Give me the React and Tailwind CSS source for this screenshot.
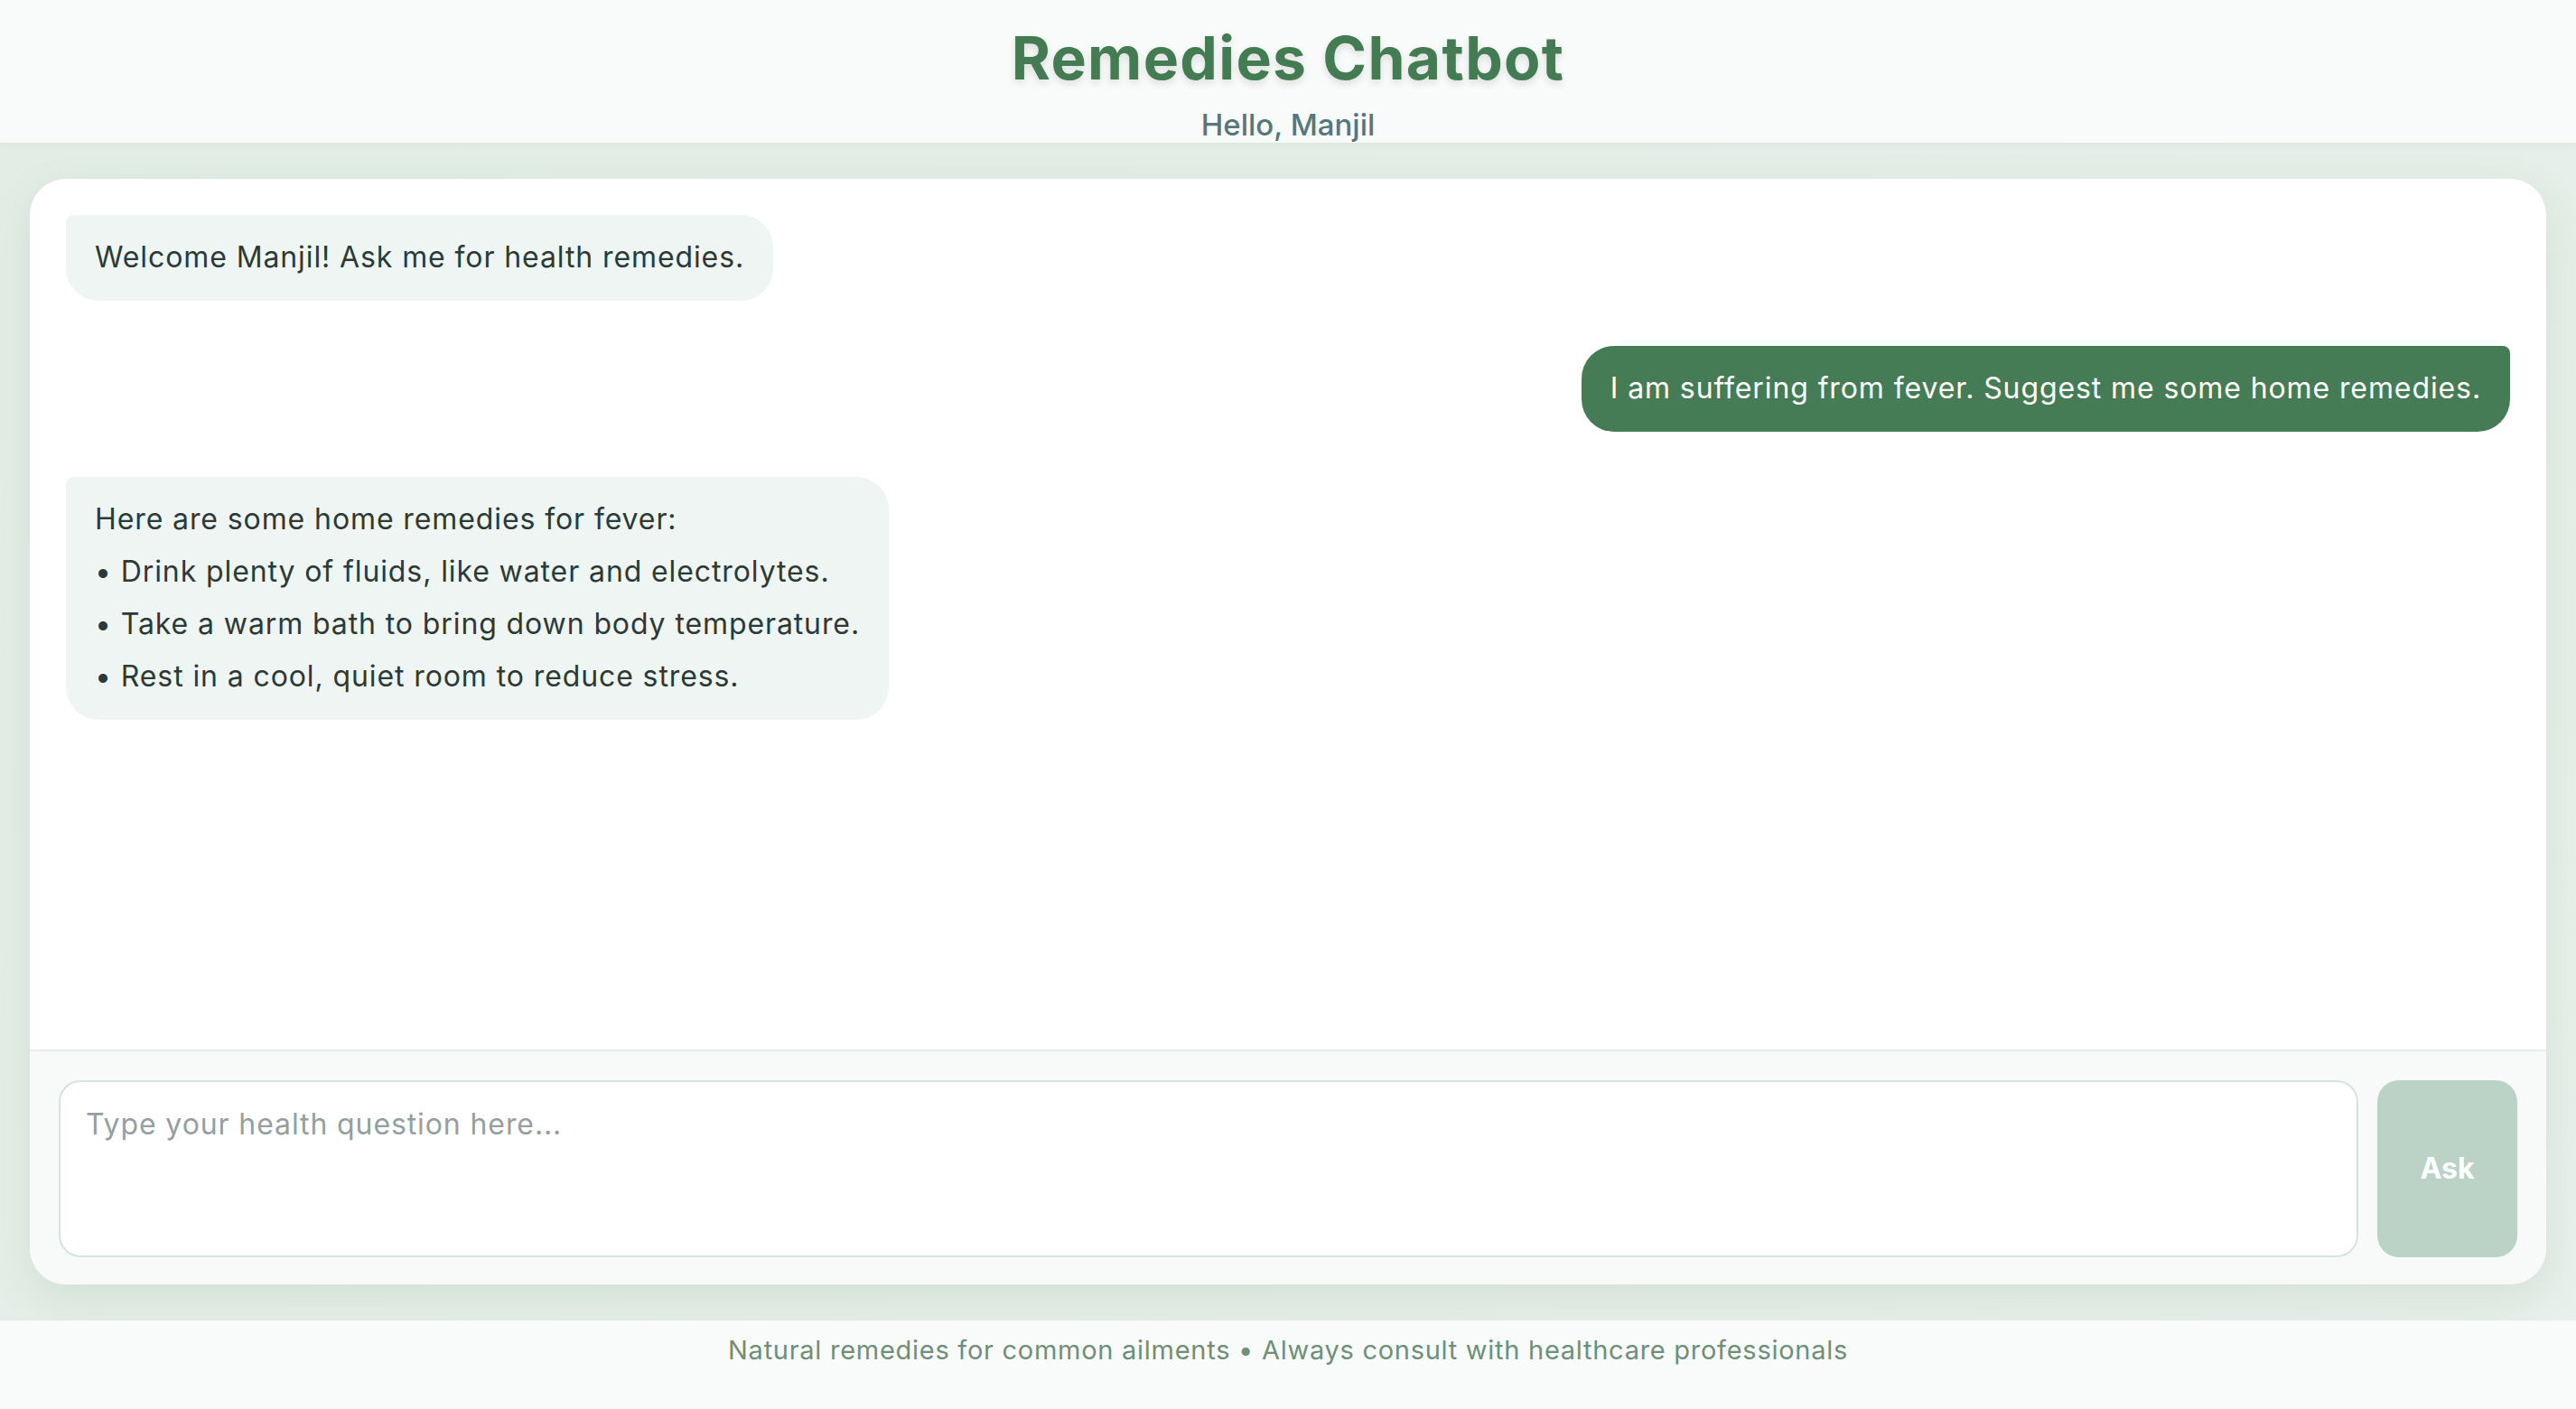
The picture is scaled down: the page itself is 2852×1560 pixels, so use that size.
import { useState } from "react";

const messages = [
  { id: 1, from: "bot", lines: ["Welcome Manjil! Ask me for health remedies."] },
  { id: 2, from: "user", lines: ["I am suffering from fever. Suggest me some home remedies."] },
  {
    id: 3,
    from: "bot",
    lines: [
      "Here are some home remedies for fever:",
      "• Drink plenty of fluids, like water and electrolytes.",
      "• Take a warm bath to bring down body temperature.",
      "• Rest in a cool, quiet room to reduce stress.",
    ],
  },
];

function Bubble({ msg }) {
  const mine = msg.from === "user";
  return (
    <div
      className={`max-w-[70%] px-8 pt-6 pb-[25px] text-[32px] leading-[46px] tracking-[0.028em] rounded-[36px] flex flex-col gap-3 ${
        mine
          ? "self-end bg-[#467c55] text-white rounded-tr-[8px]"
          : "self-start bg-[#eff5f2] text-[#2c3a37] rounded-tl-[8px]"
      }`}
    >
      {msg.lines.map((l, i) => (
        <div key={i}>{l}</div>
      ))}
    </div>
  );
}

export default function App() {
  const [question, setQuestion] = useState("");

  return (
    <div className="h-[1560px] flex flex-col bg-gradient-to-br from-[#e2ede6] to-[#e8f0eb] font-[Inter,'Noto_Sans',sans-serif]">
      {/* header */}
      <header className="h-[158px] shrink-0 bg-[#f8fbf9] flex flex-col items-center pt-[26px] shadow-[0_2px_8px_rgba(67,124,82,0.06)]">
        <h1 className="text-[66px] leading-[77px] font-bold tracking-[0.02em] text-[#437c52] [text-shadow:0_4px_8px_rgba(0,0,0,0.12)]">
          Remedies Chatbot
        </h1>
        <div className="mt-4 text-[33px] leading-[38px] font-medium text-[#56777c]">Hello, Manjil</div>
      </header>

      {/* chat card */}
      <main className="flex-1 min-h-0 px-[33px] py-10">
        <div className="h-full flex flex-col bg-white rounded-[40px] overflow-hidden shadow-[0_16px_48px_rgba(67,124,82,0.12)]">
          <div className="flex-1 min-h-0 p-10 flex flex-col gap-[50px]">
            {messages.map((m) => (
              <Bubble key={m.id} msg={m} />
            ))}
          </div>

          <div className="border-t-2 border-[#e6efea] bg-[#f8faf9] px-8 pt-8 pb-[30px] flex gap-[21px]">
            <textarea
              value={question}
              onChange={(e) => setQuestion(e.target.value)}
              placeholder="Type your health question here..."
              className="flex-1 h-[196px] resize-none rounded-[24px] border-2 border-[#d4e6dc] bg-white px-[28px] py-6 text-[32px] leading-[46px] tracking-[0.028em] text-[#2c3a37] placeholder:text-[#959f9f] outline-none"
            />
            <button
              disabled={!question.trim()}
              className="w-[155px] h-[196px] rounded-[24px] bg-[#bad3c6] text-white text-[32px] font-bold"
            >
              Ask
            </button>
          </div>
        </div>
      </main>

      {/* footer */}
      <footer className="h-[98px] shrink-0 bg-[#f9fbfa] text-center pt-[14px] text-[29px] leading-[38px] tracking-[0.025em] text-[#6f8f78]">
        Natural remedies for common ailments • Always consult with healthcare professionals
      </footer>
    </div>
  );
}
